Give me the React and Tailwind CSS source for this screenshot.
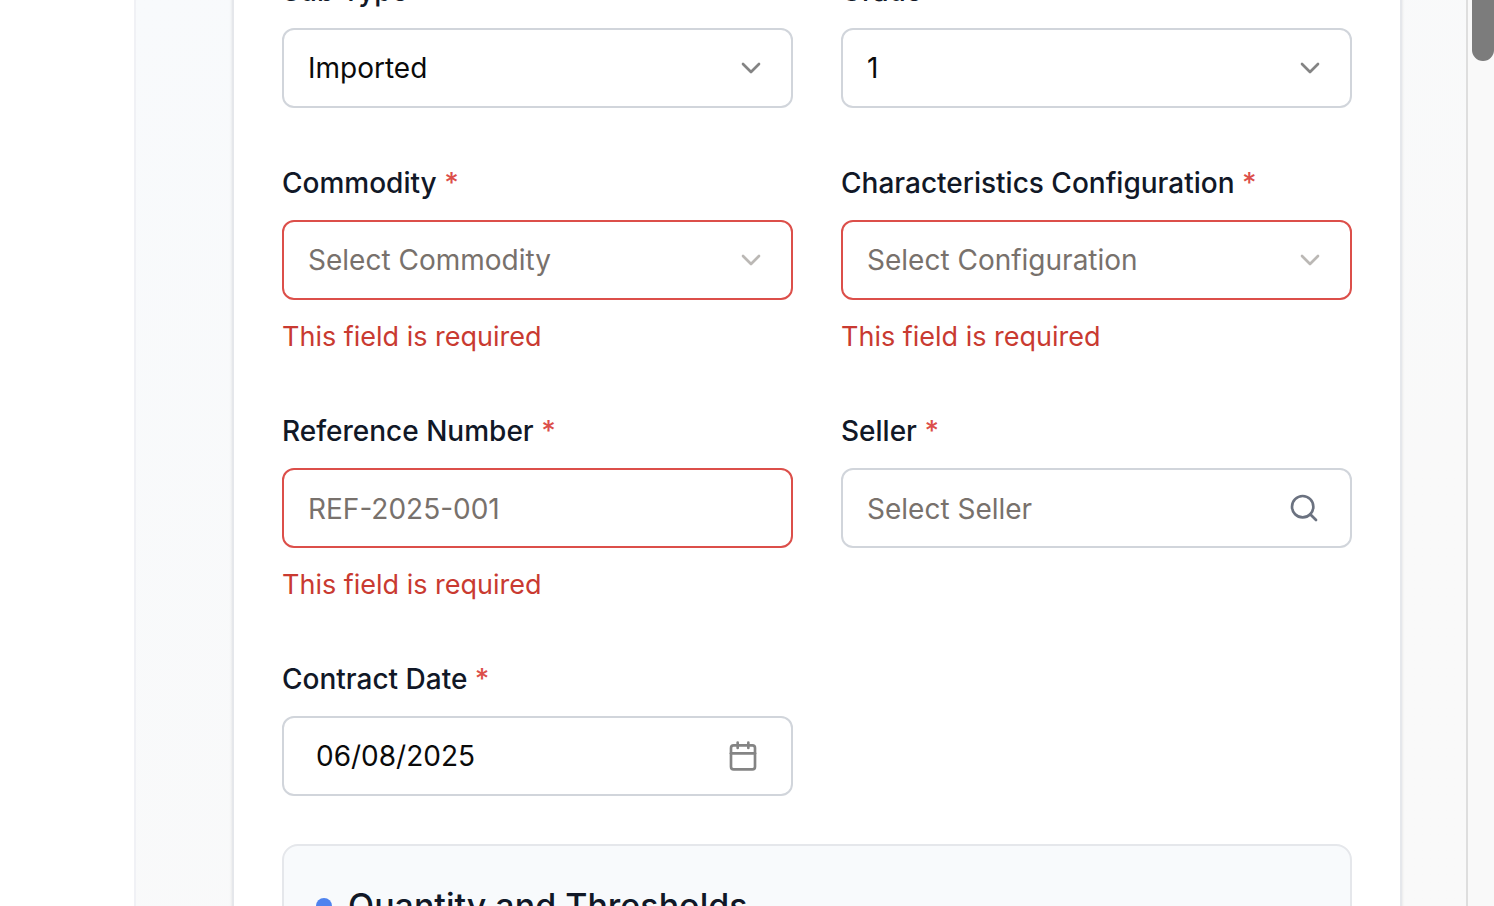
import React from "react";
import { ChevronDown, Search, Calendar } from "lucide-react";

const boxBase =
  "block h-20 w-full appearance-none rounded-xl border-2 bg-white px-6 text-[28px] leading-10 outline-none placeholder:text-[#78716c]";

function Field({ id, label, error, required = true, children }) {
  return (
    <div className="flex flex-col">
      <label htmlFor={id} className="mb-2.5 block text-[28px] leading-[54px] font-medium text-[#111827]">
        {label} {required && <span className="text-[#dc4f4a]">*</span>}
      </label>
      {children}
      {error && <p className="mt-4 text-[27px] leading-[42px] text-[#c93a31]">This field is required</p>}
    </div>
  );
}

function SelectBox({ id, value, error, placeholder }) {
  return (
    <div className="relative">
      <select
        id={id}
        defaultValue={value}
        className={`${boxBase} ${error ? "border-[#dc4f4a]" : "border-[#d1d5db]"} ${placeholder ? "text-[#78716c]" : "text-[#0a0a0a]"}`}
      >
        <option>{value}</option>
      </select>
      <ChevronDown
        size={32}
        className={`pointer-events-none absolute top-6 right-[26px] ${placeholder ? "text-[#bbb8b5]" : "text-[#848484]"}`}
      />
    </div>
  );
}

export default function App() {
  return (
    <div className="flex h-screen overflow-hidden bg-white font-['Inter',sans-serif]">
      <aside className="w-[136px] shrink-0 border-r-2 border-[#f0f1f5]" />
      <main className="min-w-0 flex-1 overflow-hidden bg-linear-to-br from-[#f8fafc] to-[#f9f9f9] to-75% pr-16 pl-24">
        <form className="-mt-9 border-x-2 border-[#e5e7eb] bg-white px-12 shadow-sm">
          <div className="grid grid-cols-2 gap-x-12">
            <div className="h-48">
              <Field id="type" label="Sub Type" required={false}>
                <SelectBox id="type" value="Imported" />
              </Field>
            </div>
            <Field id="grade" label="Grade" required={false}>
              <SelectBox id="grade" value="1" />
            </Field>
            <div className="h-[248px]">
              <Field id="commodity" label="Commodity" error>
                <SelectBox id="commodity" value="Select Commodity" error placeholder />
              </Field>
            </div>
            <Field id="configuration" label="Characteristics Configuration" error>
              <SelectBox id="configuration" value="Select Configuration" error placeholder />
            </Field>
            <div className="h-[248px]">
              <Field id="reference" label="Reference Number" error>
                <input id="reference" placeholder="REF-2025-001" className={`${boxBase} border-[#dc4f4a] pt-0.5`} />
              </Field>
            </div>
            <Field id="seller" label="Seller">
              <div className="relative">
                <input id="seller" placeholder="Select Seller" className={`${boxBase} border-[#d1d5db] pt-0.5`} />
                <Search size={32} className="pointer-events-none absolute top-6 right-8 text-[#6b7280]" />
              </div>
            </Field>
            <Field id="date" label="Contract Date">
              <div className="relative">
                <input id="date" defaultValue="06/08/2025" className={`${boxBase} border-[#d1d5db] pl-8 text-[#0a0a0a]`} />
                <Calendar size={32} className="pointer-events-none absolute top-6 right-[34px] text-[#848484]" />
              </div>
            </Field>
          </div>
          <section className="mt-12 rounded-2xl border-2 border-[#e5e7eb] bg-[#f8fafc] p-8">
            <h2 className="flex items-center gap-4 text-[34px] leading-[56px] font-medium text-[#111827]">
              <span className="size-4 rounded-full bg-[#4f83ee]" />
              Quantity and Thresholds
            </h2>
          </section>
        </form>
      </main>
      <div className="w-7 shrink-0 border-l-2 border-[#dedede] bg-[#f9f9f9] pl-1">
        <div className="h-[61px] rounded-b-full bg-[#7c7c7c]" />
      </div>
    </div>
  );
}
